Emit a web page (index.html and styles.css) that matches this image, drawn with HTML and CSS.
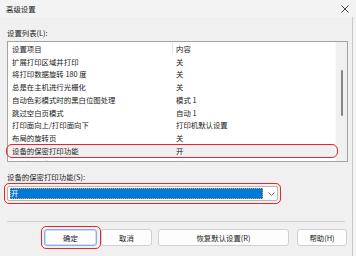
FILE: index.html
```html
<!DOCTYPE html>
<html>
<head>
<meta charset="utf-8">
<link rel="stylesheet" href="styles.css">
</head>
<body>
<div class="win">
  <div class="titlebar">
    <span class="title">高级设置</span>
    <svg class="close" width="8" height="8" viewBox="0 0 8 8"><path d="M0.5 0.5L7.5 7.5M7.5 0.5L0.5 7.5" stroke="#333" stroke-width="0.9" fill="none"/></svg>
  </div>
  <div class="body">
    <div class="lbl lbl1">设置列表(L):</div>
    <div class="list">
      <div class="rows">
        <div class="row head"><span class="c1">设置项目</span><span class="c2">内容</span></div>
        <div class="row"><span class="c1">扩展打印区域并打印</span><span class="c2">关</span></div>
        <div class="row"><span class="c1">将打印数据旋转 180 度</span><span class="c2">关</span></div>
        <div class="row"><span class="c1">总是在主机进行光栅化</span><span class="c2">关</span></div>
        <div class="row"><span class="c1">自动色彩模式时的黑白位图处理</span><span class="c2">模式 1</span></div>
        <div class="row"><span class="c1">跳过空白页模式</span><span class="c2">自动 1</span></div>
        <div class="row"><span class="c1">打印面向上/打印面向下</span><span class="c2">打印机默认设置</span></div>
        <div class="row"><span class="c1">布局的旋转页</span><span class="c2">关</span></div>
        <div class="row selected"><span class="c1">设备的保密打印功能</span><span class="c2">开</span></div>
        <div class="row"><span class="c1">彩色打印模式</span><span class="c2">关</span></div>
      </div>
      <div class="sb"><div class="thumb"></div></div>
    </div>
    <div class="lbl lbl2">设备的保密打印功能(S):</div>
    <div class="combo">
      <div class="sel">开</div>
      <svg class="chev" width="7" height="4" viewBox="0 0 7 4"><path d="M0.5 0.5L3.5 3.5L6.5 0.5" stroke="#555" stroke-width="0.8" fill="none"/></svg>
    </div>
    <div class="sep"></div>
    <div class="btns">
      <div class="btn ok">确定</div>
      <div class="btn cancel">取消</div>
      <div class="btn reset">恢复默认设置(R)</div>
      <div class="btn help">帮助(H)</div>
    </div>
  </div>
  <div class="mark mark-row"></div>
  <div class="mark mark-combo"></div>
  <div class="mark mark-ok"></div>
</div>
</body>
</html>
```
FILE: styles.css
```css
* { box-sizing: border-box; }
html, body { margin: 0; padding: 0; }
body {
  width: 356px;
  height: 256px;
  overflow: hidden;
  background: #f3f3f3;
  font-family: "Noto Sans CJK SC", "Noto Sans", sans-serif;
  font-size: 7.4px;
  color: #1a1a1a;
}
.win {
  position: relative;
  width: 356px;
  height: 256px;
}
.titlebar {
  height: 17px;
  display: flex;
  align-items: center;
  justify-content: space-between;
  padding: 0 7px 0 6px;
}
.title { line-height: 9px; }
.close { margin-top: 0; }
.body {
  width: 353px;
  height: 239px;
  background: #f0f0f0;
  border-right: 1px solid #c9c9c9;
  padding-left: 7px;
  display: flex;
  flex-direction: column;
}
.lbl { line-height: 9px; height: 9px; }
.lbl1 { margin-top: 11px; }
.list {
  margin-top: 4px;
  width: 341px;
  height: 121px;
  border: 1px solid #a3a3a3;
  background: #fff;
  display: flex;
  overflow: hidden;
}
.rows { flex: 1; overflow: hidden; }
.row {
  height: 12.75px;
  display: flex;
  align-items: center;
  line-height: 9px;
  white-space: nowrap;
}
.c1 { width: 164px; padding-left: 4px; }
.c2 { padding-left: 4px; }
.head .c2 { border-left: 1px solid #e5e5e5; padding-left: 3px; height: 12px; display: flex; align-items: center; }
.selected { background: #f0f0f0; }
.sb {
  width: 12px;
  background: #f0f0f0;
  border-left: 1px solid #fafafa;
  position: relative;
}
.thumb {
  position: absolute;
  left: 5px;
  top: 28px;
  width: 1.5px;
  height: 46px;
  background: #858585;
  border-radius: 1px;
}
.lbl2 { margin-top: 10px; }
.combo {
  margin-top: 5px;
  width: 271px;
  height: 15px;
  background: #fff;
  border: 1px solid #b5b5b5;
  border-radius: 2px;
  display: flex;
  align-items: center;
  padding-left: 2px;
}
.sel {
  width: 253px;
  height: 11px;
  background: #0078d7;
  color: #fff;
  line-height: 9px;
  padding-left: 1px;
  outline: 1px dotted #f0a030;
  outline-offset: -1px;
}
.chev { margin-left: 5px; }
.sep {
  margin-top: 20px;
  width: 338px;
  height: 1px;
  background: #d2d2d2;
}
.btns {
  margin-top: 7px;
  display: flex;
}
.btn {
  height: 17px;
  background: #fdfdfd;
  border: 1px solid #d0d0d0;
  border-radius: 3px;
  display: flex;
  align-items: center;
  justify-content: center;
  line-height: 9px;
}
.ok { margin-left: 37px; width: 53px; border-color: #7fb3e6; box-shadow: inset 0 0 0 0.5px #9cc4ec; }
.cancel { margin-left: 4px; width: 51px; }
.reset { margin-left: 6px; width: 131px; }
.help { margin-left: 8px; width: 50px; }
.mark {
  position: absolute;
  border: 1.5px solid #e8242c;
  border-radius: 6px;
}
.mark-row { left: 6px; top: 144px; width: 332px; height: 14px; }
.mark-combo { left: 4px; top: 183px; width: 277px; height: 21px; border-radius: 5px; }
.mark-ok { left: 41px; top: 226px; width: 60px; height: 23px; border-radius: 5px; }
```
